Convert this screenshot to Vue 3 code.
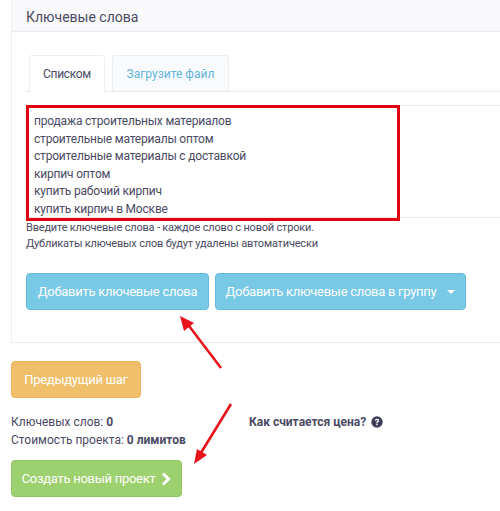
<script setup>
const keywords = [
  'продажа строительных материалов',
  'строительные материалы оптом',
  'строительные материалы с доставкой',
  'кирпич оптом',
  'купить рабочий кирпич',
  'купить кирпич в Москве'
]
</script>

<template>
  <div class="page">
    <section class="panel">
      <header class="panel-head">Ключевые слова</header>
      <div class="panel-body">
        <div class="tabs">
          <div class="tab active">Списком</div>
          <div class="tab second">Загрузите файл</div>
        </div>
        <div class="textarea">
          <div v-for="k in keywords" :key="k" class="kw">{{ k }}</div>
          <div class="red-box"></div>
        </div>
        <p class="help">Введите ключевые слова - каждое слово с новой строки.<br>Дубликаты ключевых слов будут удалены автоматически</p>
        <div class="actions">
          <div class="btn info wide-a">Добавить ключевые слова</div>
          <div class="btn info wide-b">Добавить ключевые слова в группу<span class="caret"></span></div>
        </div>
      </div>
    </section>

    <div class="btn warn">Предыдущий шаг</div>

    <div class="stats">
      <div class="stat-left">
        <div>Ключевых слов: <b>0</b></div>
        <div>Стоимость проекта: <b>0 лимитов</b></div>
      </div>
      <div class="price">Как считается цена?
        <svg class="q" viewBox="0 0 12 12" width="12" height="12">
          <circle cx="6" cy="6" r="5.7" fill="#3d3c5a" />
          <path d="M3.9 4.7C4 3.4 4.9 2.8 6 2.8c1.2 0 2.1.7 2.1 1.8 0 1.6-1.6 1.4-1.6 2.6H5.2c0-1.9 1.5-1.7 1.5-2.6 0-.4-.3-.7-.8-.7s-.8.3-.8.9z" fill="#fff" />
          <rect x="5.2" y="7.8" width="1.4" height="1.4" fill="#fff" />
        </svg>
      </div>
    </div>

    <div class="btn success">Создать новый проект
      <svg class="chev" viewBox="0 0 10 14" width="10" height="14">
        <path d="M2 1.5 7.5 7 2 12.5" fill="none" stroke="#fff" stroke-width="3" />
      </svg>
    </div>

    <svg class="arrows" width="500" height="511" viewBox="0 0 500 511">
      <path d="M221 368 186 322" stroke="#e8121a" stroke-width="2.6" fill="none" />
      <path d="M180 316 194 323 184 331z" fill="#e8121a" />
      <path d="M231 404 199 456" stroke="#e8121a" stroke-width="2.6" fill="none" />
      <path d="M194 464 197 449 207 455z" fill="#e8121a" />
    </svg>
  </div>
</template>

<style scoped>
.page {
  position: relative;
  width: 500px;
  height: 511px;
  overflow: hidden;
  background: #fff;
  font-family: Roboto, "Liberation Sans", sans-serif;
  font-size: 12px;
  line-height: 17.5px;
  color: #4a4a63;
}
.panel {
  margin-left: 11px;
  width: 520px;
  height: 343px;
  box-sizing: border-box;
  border: 1px solid #eeeef1;
  border-top: 0;
}
.panel-head {
  height: 32px;
  box-sizing: border-box;
  padding: 7px 14px 0;
  background: #f9f9fb;
  border-bottom: 1px solid #ececf0;
  font-size: 14px;
  line-height: 20px;
}
.panel-body {
  padding: 23px 14px 0;
}
.tabs {
  display: flex;
  gap: 7px;
  padding-left: 3px;
  height: 36px;
  border-bottom: 1px solid #e8e8ea;
  box-sizing: content-box;
}
.tab {
  height: 36px;
  box-sizing: border-box;
  padding-top: 10px;
  text-align: center;
  border: 1px solid #eceef2;
  border-bottom: 0;
  border-radius: 3px 3px 0 0;
  background: #f9fafc;
  color: #63b4dc;
}
.tab.active {
  width: 76px;
  background: #fff;
  color: #4a4a63;
  letter-spacing: -0.3px;
  height: 37px;
  position: relative;
}
.tab.second {
  width: 117px;
}
.textarea {
  position: relative;
  margin-top: 13px;
  height: 113px;
  box-sizing: border-box;
  padding: 7px 8px;
  border-top: 1px solid #e8e8ea;
  border-bottom: 1px solid #e8e8ea;
  letter-spacing: -0.19px;
}
.kw {
  white-space: nowrap;
}
.red-box {
  position: absolute;
  left: 0;
  top: -1px;
  width: 374px;
  height: 116px;
  box-sizing: border-box;
  border: 3px solid #e3000f;
}
.help {
  margin: 2px 0 0;
  font-size: 11px;
  letter-spacing: -0.19px;
  line-height: 15.5px;
}
.actions {
  display: flex;
  gap: 6px;
  margin-top: 22px;
}
.btn {
  height: 37px;
  box-sizing: border-box;
  display: flex;
  align-items: center;
  justify-content: center;
  gap: 3px;
  border-radius: 4px;
  color: #fff;
  font-size: 13px;
  letter-spacing: -0.28px;
  white-space: pre;
}
.info {
  background: #77c9e6;
  border: 1px solid #63b9dc;
}
.wide-a { width: 183px; }
.wide-b { width: 251px; }
.caret {
  display: inline-block;
  margin-left: 8px;
  border-left: 4px solid transparent;
  border-right: 4px solid transparent;
  border-top: 4px solid #fff;
}
.warn {
  margin: 18px 0 0 11px;
  width: 130px;
  background: #f0bf6b;
  border: 1px solid #eab45a;
}
.stats {
  display: flex;
  margin: 15px 0 0 11px;
  line-height: 18px;
}
.stat-left {
  width: 238px;
}
.price {
  font-weight: 700;
  display: flex;
  align-items: flex-start;
  gap: 2px;
  white-space: pre;
  height: 17px;
}
.q {
  margin-top: 3px;
}
.success {
  margin: 11px 0 0 11px;
  width: 171px;
  background: #9dd06f;
  border: 1px solid #90c660;
}
.arrows {
  position: absolute;
  left: 0;
  top: 0;
  pointer-events: none;
}
</style>
